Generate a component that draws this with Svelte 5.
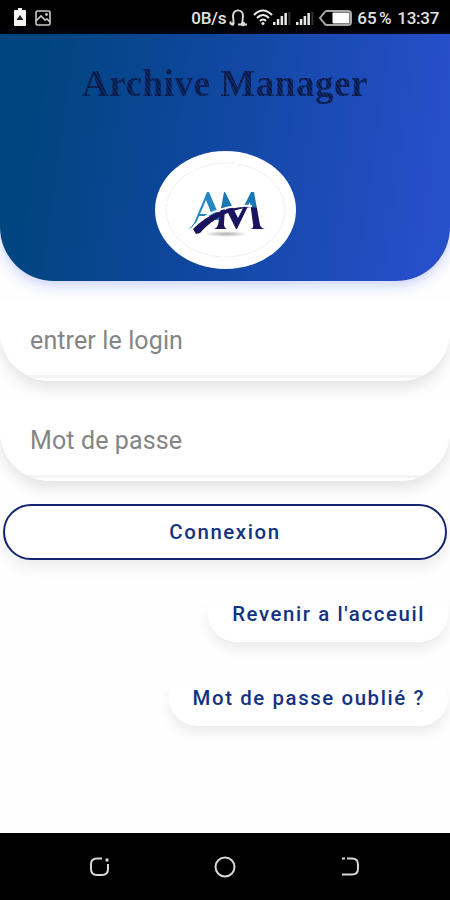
<script>
    let login = ''
    let password = ''
    const links = ["Revenir a l'acceuil", 'Mot de passe oublié ?']
    const bars = [3, 6, 9, 12]
</script>

<div class='screen'>
    <div class='status'>
        <svg class='battery_small' width='12' height='18' viewBox='0 0 12 18'>
            <path d='M4 0h4v2h3q1 0 1 1v14q0 1-1 1H1q-1 0-1-1V3q0-1 1-1h3z' fill='#f4f4f4' />
            <path d='M6 7l-3.5 5h7zM2.5 11l7-1' fill='#222' />
        </svg>
        <svg width='16' height='16' viewBox='0 0 16 16' fill='none' stroke='#ccc' stroke-width='1.6'>
            <rect x='1' y='1' width='14' height='14' rx='1.5' />
            <path d='M1 11l5-5 4 4 2-1 3 3' />
            <circle cx='11.5' cy='4.5' r='.6' fill='#ccc' />
        </svg>
        <span class='speed'>0B/s</span>
        <svg class='headset' width='19' height='18' viewBox='0 0 19 18' fill='none' stroke='#ddd' stroke-width='1.9'>
            <path d='M4.5 15V12L4 7C4-.5 14-.5 14 7l-.5 5v3' />
            <path d='M1.5 12.5v3M9 15.5h9' />
            <circle cx='3.5' cy='15' r='1.8' fill='#ddd' stroke='none' />
            <circle cx='14' cy='15' r='2.2' fill='#ddd' stroke='none' />
        </svg>
        <svg class='wifi' width='20' height='17' viewBox='0 0 20 17' fill='none' stroke='#eee' stroke-width='2'>
            <path d='M1 6Q10-3 19 6M4 9Q10 3 16 9M7 12q3-3 6 0' />
            <circle cx='10' cy='14.5' r='1.5' fill='#eee' stroke='none' />
        </svg>
        {#each [0, 1] as sim (sim)}
        <svg class='signal' width='18' height='14' viewBox='0 0 18 14'>
            {#each bars as h, i (i)}
            <rect x={i * 3.8} y={13 - h} width='2.5' height={h} fill='#e8e8e8' />
            {/each}
            <rect x='15.4' y='0' width='2' height='13' fill='#333' />
        </svg>
        {/each}
        <svg class='battery' width='33' height='16' viewBox='0 0 33 16'>
            <path d='M1 8l4-5q1-2 3-2h21q3 0 3 3v8q0 3-3 3H8q-2 0-3-2z' fill='#000' stroke='#aaa' stroke-width='2' />
            <rect x='13.5' y='2.5' width='17' height='11' rx='1' fill='#fff' />
        </svg>
        <span class='percent'>65 %</span>
        <span class='clock'>13:37</span>
    </div>

    <main>
        <header>
            <h1>Archive Manager</h1>
            <div class='logo'>
                <svg width='141' height='118' viewBox='0 0 141 118'>
                    <defs>
                        <linearGradient id='letters' gradientUnits='userSpaceOnUse' x1='0' y1='40' x2='0' y2='78'>
                            <stop offset='.4' stop-color='#1977b5' />
                            <stop offset='.46' stop-color='#1b145f' />
                        </linearGradient>
                        <radialGradient id='ground'>
                            <stop offset='0' stop-color='#777' stop-opacity='.6' />
                            <stop offset='1' stop-color='#777' stop-opacity='0' />
                        </radialGradient>
                    </defs>
                    <ellipse cx='70.5' cy='59' rx='59.5' ry='47' fill='none' stroke='#e9ebed' stroke-width='.8' stroke-dasharray='42 2' />
                    <ellipse cx='71' cy='83' rx='22' ry='3' fill='url(#ground)' />
                    <path d='M32 78q5-1 8-8l12-29h2l12 28h-7l-8-20-9 21q-2 7-10 8z' fill='#2587c1' />
                    <path d='M44 63h14v2H43z' fill='#2587c1' />
                    <path d='M59 78q3-1 4-4l6-33h1l13 26 13-26h3l6 33q1 3 5 4H96q3-1 2-5l-3-22-13 27h-1L70 56l-1 17q0 4 3 5z' fill='url(#letters)' />
                    <path d='M36 79Q56 53 97 55' fill='none' stroke='#fff' stroke-width='2' />
                    <path d='M38 78Q60 55 96 56Q64 60 45 82l-4 1z' fill='#1b145f' />
                </svg>
            </div>
        </header>

        <form on:submit|preventDefault>
            <div class='field'>
                <input type='text' placeholder='entrer le login' bind:value={login} />
            </div>
            <div class='field'>
                <input type='password' placeholder='Mot de passe' bind:value={password} />
            </div>
            <button class='submit'>Connexion</button>
        </form>

        <div class='links'>
            {#each links as link (link)}
            <button>{link}</button>
            {/each}
        </div>
    </main>

    <nav>
        <svg width='22' height='22' viewBox='0 0 22 22'>
            <path d='M13 2.5H8Q2 2.5 2 8v5q0 6 6 6h5q6 0 6-6V8' />
            <path d='M16.5 4h3' stroke-width='3' />
        </svg>
        <svg width='22' height='22' viewBox='0 0 22 22'>
            <circle cx='11' cy='11' r='9.5' />
        </svg>
        <svg width='22' height='22' viewBox='0 0 22 22'>
            <path d='M3 2.5h3M8 2.5h5q6 0 6 6v4q0 6-6 6H3' />
        </svg>
    </nav>
</div>

<style>
    :global(body) {
        margin: 0;
        background: #fff;
    }
    .screen {
        display: flex;
        flex-direction: column;
        width: 450px;
        height: 900px;
        overflow: hidden;
        background: #fefefe;
        font-family: Roboto, sans-serif;
    }
    .status {
        display: flex;
        align-items: center;
        height: 34px;
        flex: none;
        box-sizing: border-box;
        padding: 1px 11px 0 14px;
        background: #000;
        color: #e2e2e2;
        font-size: 17px;
        font-weight: 500;
        white-space: nowrap;
    }
    .battery_small {
        margin: 0 9px 2px 0;
    }
    .speed {
        width: 37px;
        margin-left: auto;
        letter-spacing: -.2px;
    }
    .headset {
        margin-left: 1px;
    }
    .wifi {
        margin-left: 5px;
    }
    .signal {
        margin: 2px 5px 0 0;
    }
    .battery {
        margin: 0 5px 0 0;
    }
    .percent {
        width: 36px;
        word-spacing: -2px;
    }
    .clock {
        margin-left: 4px;
        letter-spacing: -.3px;
    }

    main {
        flex: 1;
    }
    header {
        display: flex;
        flex-direction: column;
        align-items: center;
        height: 247px;
        border-radius: 0 0 54px 54px;
        background: linear-gradient(98deg, #00457e 8%, #0d469a 40%, #264fca 94%);
        box-shadow: 0 4px 14px rgba(60, 90, 255, .28);
    }
    /* fine hatched fill gives the title its engraved look */
    h1 {
        margin: 27px 0 0;
        color: transparent;
        background: repeating-linear-gradient(60deg, #08173f 0 1.5px, #0e2a68 1.5px 3px);
        -webkit-background-clip: text;
        background-clip: text;
        font: 700 37px/46px 'Liberation Serif', serif;
        letter-spacing: .55px;
        white-space: nowrap;
    }
    .logo {
        width: 141px;
        height: 118px;
        margin-top: 44px;
        border-radius: 50%;
        background: #fff;
    }

    form {
        display: flex;
        flex-direction: column;
        padding-top: 20px;
    }
    .field {
        height: 80px;
        margin-bottom: 20px;
        border-radius: 0 0 50px 50px;
        background: linear-gradient(#fff 74px, #f4f4f4 74px, #f4f4f4 77px, #fff 77px);
        box-shadow: 0 8px 14px rgba(0, 0, 0, .1);
        clip-path: inset(0 0 -30px 0);
    }
    input {
        width: 100%;
        height: 78px;
        box-sizing: border-box;
        padding: 0 30px;
        border: 0;
        outline: 0;
        background: none;
        font: 400 25px Roboto, sans-serif;
        letter-spacing: .12px;
    }
    input::placeholder {
        color: #858585;
        opacity: 1;
    }
    button {
        border: 0;
        border-radius: 28px;
        background: #fff;
        color: #12337f;
        font: 500 20.4px Roboto, sans-serif;
        letter-spacing: 1.6px;
    }
    .submit {
        height: 56px;
        margin: 3px 3px 0;
        padding-bottom: 2px;
        border: 2px solid #12236f;
        box-shadow: 0 8px 14px rgba(0, 0, 0, .07);
    }
    .links {
        display: flex;
        flex-direction: column;
        align-items: flex-end;
        gap: 28px;
        padding: 26px 2px 0;
    }
    .links button {
        height: 56px;
        padding: 0 23px 1px 24px;
        box-shadow: 0 8px 12px rgba(0, 0, 0, .07);
        clip-path: inset(20px -20px -30px -20px);
    }

    nav {
        display: flex;
        justify-content: center;
        gap: 103px;
        height: 67px;
        flex: none;
        box-sizing: border-box;
        padding-top: 23px;
        background: #000;
    }
    nav svg {
        fill: none;
        stroke: #d8d8d8;
        stroke-width: 2;
    }
</style>
